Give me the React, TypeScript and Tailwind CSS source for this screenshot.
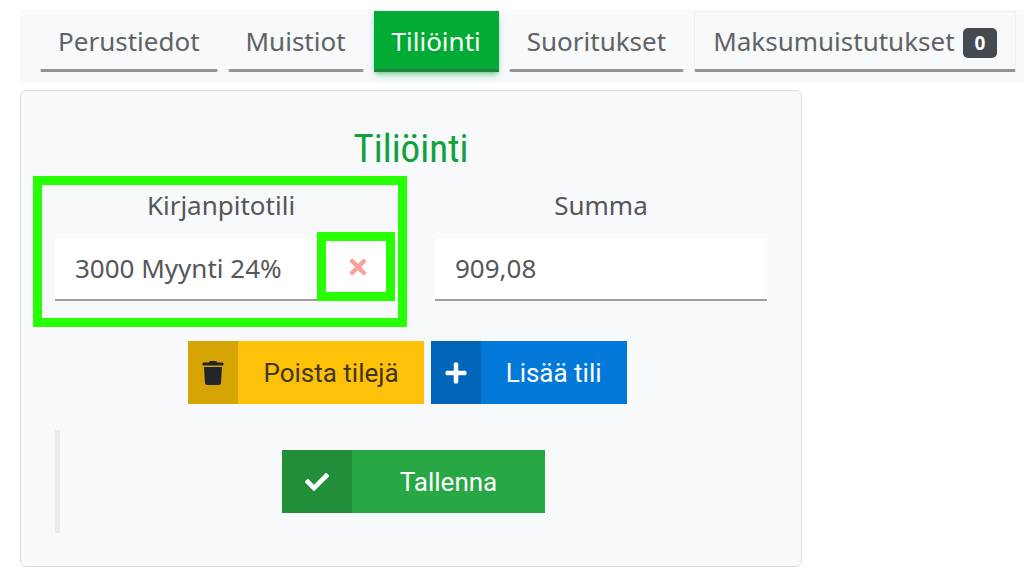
import { useState } from "react";
import type { ReactNode } from "react";
import { FaCheck, FaPlus, FaTimes, FaTrash } from "react-icons/fa";

const tabs = [
  { id: "perustiedot", label: "Perustiedot" },
  { id: "muistiot", label: "Muistiot" },
  { id: "tiliointi", label: "Tiliöinti" },
  { id: "suoritukset", label: "Suoritukset" },
];

function Tab({ active, outlined, onClick, children }: {
  active: boolean;
  outlined?: boolean;
  onClick: () => void;
  children: ReactNode;
}) {
  const look = active
    ? "border-x-transparent border-t-transparent border-b-[#21803a] bg-[#02ab33] text-white shadow-md shadow-green-600/40"
    : outlined
      ? "rounded-xs border-x-[#edf1f5] border-t-[#edf1f5] border-b-[#939495] text-[#606366]"
      : "rounded-xs border-x-transparent border-t-transparent border-b-[#939495] text-[#606366]";
  return (
    <button
      type="button"
      aria-current={active ? "page" : undefined}
      onClick={onClick}
      className={`flex h-[61px] items-center gap-2 border border-b-3 whitespace-nowrap ${outlined ? "px-[18px]" : "px-[17px]"} ${look}`}
    >
      {children}
    </button>
  );
}

function ActionButton({ icon, color, wide, children }: {
  icon: ReactNode;
  color: string;
  wide?: boolean;
  children: ReactNode;
}) {
  return (
    <button type="button" className={`flex h-[63px] items-stretch font-[Roboto,sans-serif] text-[26px] leading-8 ${color}`}>
      <span className={`flex items-center justify-center bg-black/15 ${wide ? "w-[70px]" : "w-[50px]"}`}>{icon}</span>
      <span className={`flex items-center ${wide ? "px-12" : "px-[25px]"}`}>{children}</span>
    </button>
  );
}

export default function App() {
  const [tab, setTab] = useState("tiliointi");
  const [account, setAccount] = useState("3000 Myynti 24%");
  const [sum, setSum] = useState("909,08");
  const field =
    "h-[63px] w-full border-b-2 border-[#9b9da0] bg-white px-5 pb-px text-[#54575b] outline-none";

  return (
    <div className="overflow-x-clip bg-white pt-[10px] pb-2 pl-5 font-['Noto_Sans','Open_Sans',sans-serif] text-[26px] leading-8 text-[#54575b]">
      <nav className="flex gap-[10px] bg-[#f7f9fb] pt-px pb-[11px] pl-5">
        {tabs.map((t) => (
          <Tab key={t.id} active={tab === t.id} onClick={() => setTab(t.id)}>
            {t.label}
          </Tab>
        ))}
        <Tab outlined active={tab === "maksumuistutukset"} onClick={() => setTab("maksumuistutukset")}>
          Maksumuistutukset
          <span className="mt-1 rounded-[5px] bg-[#454950] px-3 text-[19px] leading-[30px] font-bold text-white">0</span>
        </Tab>
      </nav>

      <main className="mt-[7px] max-w-[782px] rounded-md border border-[#dcdfe2] bg-[#f7f9fb] px-[34px] pt-9 pb-[33px]">
        <h1 className="text-center font-['Roboto_Condensed',Roboto,sans-serif] text-[39px] leading-11 text-[#12a03e]">
          Tiliöinti
        </h1>

        <div className="mt-[18px] grid grid-cols-2 gap-12">
          <div className="relative">
            <label htmlFor="account" className="block text-center">Kirjanpitotili</label>
            <div className="relative mt-[17px]">
              <input id="account" value={account} onChange={(e) => setAccount(e.target.value)} className={field} />
              <button
                type="button"
                aria-label="Tyhjennä"
                onClick={() => setAccount("")}
                className="absolute -top-[6px] -right-2 flex h-[69px] w-[78px] items-center justify-center border-[9px] border-[#27ff03] bg-white pl-[3px] text-[#f8a19d]"
              >
                <FaTimes size={24} />
              </button>
            </div>
            <div className="pointer-events-none absolute -top-[13px] -right-5 -bottom-[26px] -left-[22px] border-[9px] border-[#27ff03]" />
          </div>
          <div>
            <label htmlFor="sum" className="block text-center">Summa</label>
            <input id="sum" value={sum} onChange={(e) => setSum(e.target.value)} className={`mt-[17px] ${field}`} />
          </div>
        </div>

        <div className="mt-10 flex justify-center gap-[7px] pr-[7px]">
          <ActionButton color="bg-[#fdc107] text-[#3f3420]" icon={<FaTrash size={24} className="text-[#212529]" />}>
            Poista tilejä
          </ActionButton>
          <ActionButton color="bg-[#0278d9] text-white" icon={<FaPlus size={24} />}>
            Lisää tili
          </ActionButton>
        </div>

        <div className="mt-[26px] flex justify-center border-l-5 border-[#e9eaed] py-5">
          <ActionButton wide color="bg-[#28a745] text-white" icon={<FaCheck size={24} />}>
            Tallenna
          </ActionButton>
        </div>
      </main>
    </div>
  );
}
